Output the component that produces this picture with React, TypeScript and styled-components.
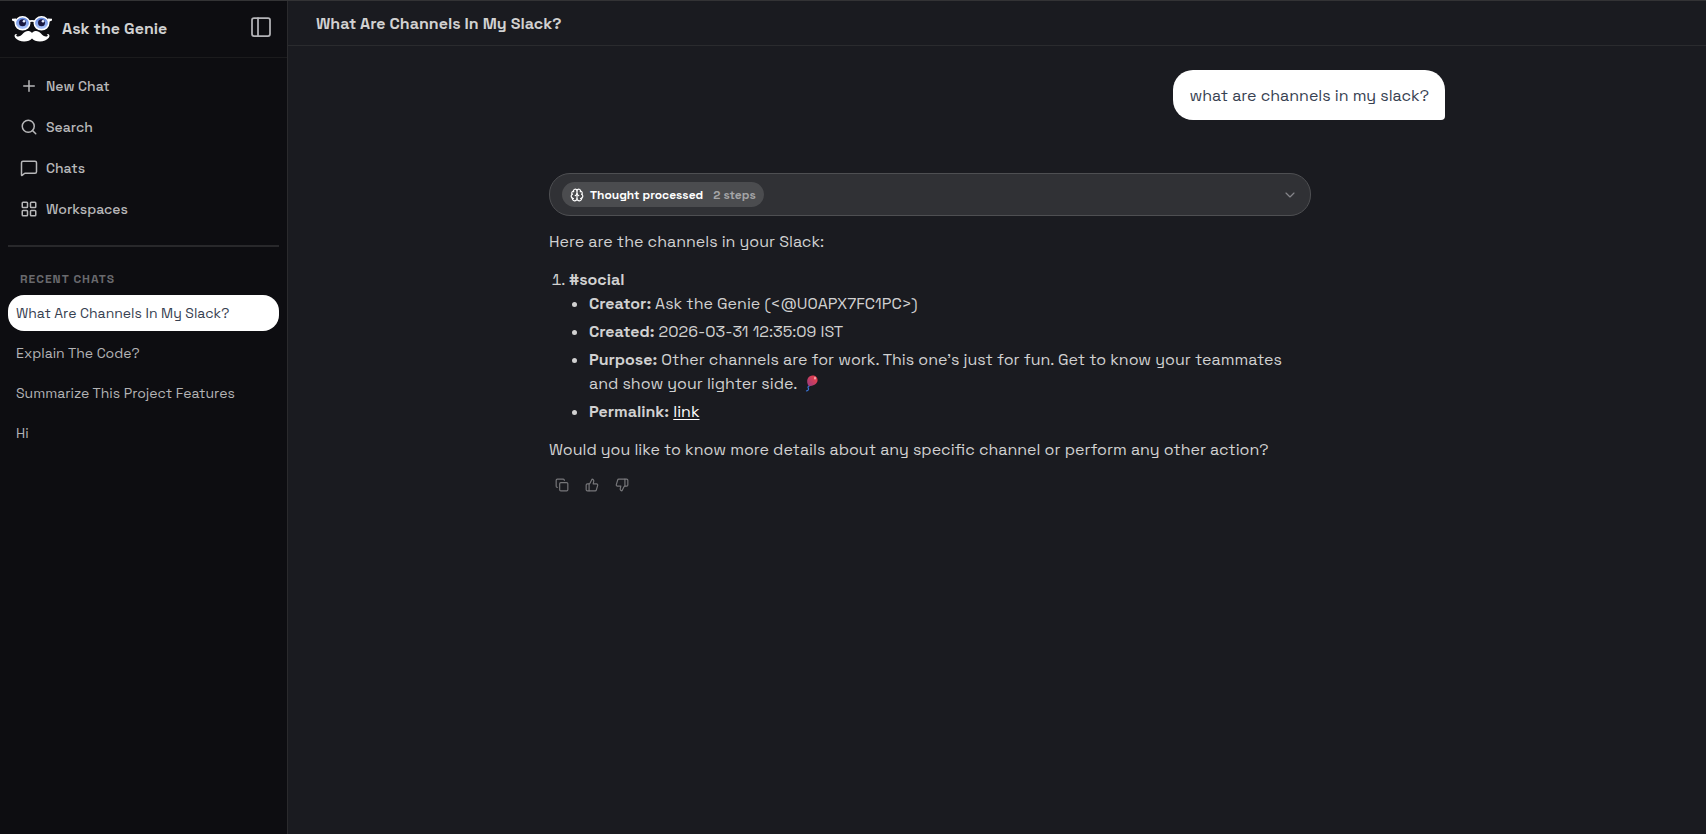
import React from "react";
import styled, { createGlobalStyle } from "styled-components";
import {
  Brain,
  ChevronDown,
  Copy,
  LayoutGrid,
  MessageSquare,
  PanelLeft,
  Plus,
  Search,
  ThumbsDown,
  ThumbsUp,
} from "lucide-react";

const GlobalStyle = createGlobalStyle`
  *, *::before, *::after { box-sizing: border-box; }
  body {
    margin: 0;
    background: #1a1b20;
    color: #d1d1d1;
    font-family: "Space Grotesk", Inter, "Liberation Sans", sans-serif;
    font-size: 16px;
    line-height: 24px;
  }
  button { font: inherit; color: inherit; background: none; border: 0; padding: 0; cursor: pointer; }
  h1, h2, p, ul, ol { margin: 0; padding: 0; font-size: inherit; }
`;

const Shell = styled.div`
  display: flex;
  min-height: 100vh;
  border-top: 1px solid #333335;
`;

const Sidebar = styled.aside`
  flex: 0 0 288px;
  display: flex;
  flex-direction: column;
  background: #0d0d11;
  border-right: 1px solid #2a2a2d;
`;

const SidebarHeader = styled.header`
  display: flex;
  align-items: center;
  height: 57px;
  padding: 0 12px;
  border-bottom: 1px solid #1b1b1d;
`;

const BrandName = styled.span`
  flex: 1;
  margin-left: 10px;
  font-weight: 600;
  font-size: 16px;
`;

const ToggleButton = styled.button`
  display: flex;
  padding: 2px;
  margin-bottom: 4px;
  color: #b4b4b8;
`;

const Nav = styled.nav`
  display: flex;
  flex-direction: column;
  gap: 5px;
  padding: 10px 8px 18px;
`;

const NavButton = styled.button`
  display: flex;
  align-items: center;
  gap: 8px;
  height: 36px;
  padding: 0 12px;
  color: #b7b7b9;
  font-size: 14px;
  font-weight: 500;
`;

const Divider = styled.hr`
  width: calc(100% - 16px);
  height: 2px;
  margin: 0 8px;
  border: 0;
  background: #28282b;
`;

const RecentTitle = styled.h2`
  margin: 24px 0 8px 20px;
  color: #69696d;
  font-size: 12px;
  line-height: 16px;
  font-weight: 600;
  letter-spacing: 1px;
`;

const ChatList = styled.ul`
  display: flex;
  flex-direction: column;
  gap: 4px;
  padding: 0 8px;
  list-style: none;
`;

const ChatButton = styled.button<{ $active?: boolean }>`
  width: 100%;
  height: 36px;
  padding: 0 8px;
  border-radius: 16px;
  text-align: left;
  font-size: 14px;
  background: ${(p) => (p.$active ? "#ffffff" : "transparent")};
  color: ${(p) => (p.$active ? "#374151" : "#b3b3b5")};
`;

const Main = styled.main`
  flex: 1;
  min-width: 0;
`;

const TopBar = styled.header`
  display: flex;
  align-items: center;
  height: 45px;
  padding: 1px 28px 0;
  border-bottom: 1px solid #2a2b2e;
`;

const Title = styled.h1`
  font-size: 16px;
  font-weight: 600;
`;

const Conversation = styled.section`
  display: flex;
  flex-direction: column;
  max-width: 896px;
  margin: 0 auto;
  padding-top: 24px;
`;

const UserBubble = styled.p`
  align-self: flex-end;
  padding: 14px 16px 12px;
  border-radius: 20px 20px 4px 20px;
  background: #ffffff;
  color: #374151;
`;

const Reply = styled.article`
  width: 85%;
  margin-top: 53px;
`;

const ThoughtBar = styled.button`
  display: flex;
  align-items: center;
  justify-content: space-between;
  width: 100%;
  height: 43px;
  padding: 0 12px;
  border: 1px solid #4e4f52;
  border-radius: 21px;
  background: #303135;
  color: #85868a;
`;

const ThoughtPill = styled.span`
  display: flex;
  align-items: center;
  height: 25px;
  padding: 0 8px;
  border-radius: 13px;
  background: #4b4c4f;
  color: #ffffff;
  font-size: 12px;
  font-weight: 600;
`;

const ThoughtLabel = styled.span`
  margin: 0 10px 0 6px;
`;

const StepCount = styled.span`
  color: #a5a5a7;
`;

const Paragraph = styled.p`
  margin: 14px 0;

  &:last-of-type {
    margin-bottom: 10px;
  }
`;

const Channels = styled.ol`
  padding-left: 20px;
`;

const Details = styled.ul`
  display: flex;
  flex-direction: column;
  gap: 4px;
  padding-left: 20px;
  list-style: disc;
`;

const Strong = styled.strong`
  font-weight: 600;
`;

const Link = styled.a`
  color: #ffffff;
  text-decoration: underline;
  text-underline-offset: 2px;
`;

const BalloonIcon = styled.svg`
  margin-left: 3px;
  vertical-align: -3px;
`;

const Actions = styled.div`
  display: flex;
  gap: 4px;
`;

const ActionButton = styled.button`
  display: flex;
  padding: 6px;
  color: #77777a;
`;

function GenieLogo() {
  return (
    <svg width="40" height="26" viewBox="0 0 40 26" aria-hidden="true">
      <defs>
        <linearGradient id="iris" x1="0" y1="0" x2="0" y2="1">
          <stop offset="0" stopColor="#5d83dd" />
          <stop offset="1" stopColor="#b4ccff" />
        </linearGradient>
      </defs>
      <path d="M0 2.800 4 2.500 5 6.500 3 7 2.300 5.500 0 4.500zM40 2.800 36 2.500 35 6.500 37 7 37.700 5.500 40 4.500z" fill="#fff" />
      <path d="M16 5.800Q20 4 24 5.800" fill="none" stroke="#fff" strokeWidth="1.800" />
      <ellipse cx="10.500" cy="7.300" rx="7.200" ry="6.500" fill="url(#iris)" stroke="#fff" strokeWidth="1.500" />
      <ellipse cx="29.500" cy="7.300" rx="7.200" ry="6.500" fill="url(#iris)" stroke="#fff" strokeWidth="1.500" />
      <circle cx="10.500" cy="6.800" r="3.500" fill="#19173f" />
      <circle cx="29.500" cy="6.800" r="3.500" fill="#19173f" />
      <circle cx="12" cy="5.300" r="1.300" fill="#e8eeff" />
      <circle cx="31" cy="5.300" r="1.300" fill="#e8eeff" />
      <path
        d="M20 17C17.500 14 13.500 14.500 11 17.500C9 20 6 21.500 4.500 20C3.800 19.200 4.500 18.200 5.500 18.500C3.500 16.800 1.500 19.200 3.200 21.800C6.500 26.500 17 26.500 20 22.500C23 26.500 33.500 26.500 36.800 21.800C38.500 19.200 36.500 16.800 34.500 18.500C35.500 18.200 36.200 19.200 35.500 20C34 21.500 31 20 29 17.500C26.500 14.500 22.500 14 20 17z"
        fill="#fff"
      />
    </svg>
  );
}

function Balloon() {
  return (
    <BalloonIcon width="16" height="17" viewBox="0 0 16 17" role="img" aria-label="balloon">
      <defs>
        <linearGradient id="balloon" x1="1" y1="0" x2="0" y2="1">
          <stop offset="0.300" stopColor="#dc3f52" />
          <stop offset="1" stopColor="#963b83" />
        </linearGradient>
      </defs>
      <path d="M6 10.500Q3 11.500 4.500 13.500Q5 15.500 2 16" fill="none" stroke="#3974d8" strokeWidth="1.200" />
      <path d="M8.500 0.500C12 0.300 14 3 13.500 6C13 9 9 11 5 11.300C3 9 2.500 5.500 4 3C5 1.300 6.500 0.600 8.500 0.500z" fill="url(#balloon)" />
      <ellipse cx="11" cy="3.200" rx="1" ry="1.400" fill="#f7a3a8" />
    </BalloonIcon>
  );
}

const navItems = [
  { label: "New Chat", Icon: Plus },
  { label: "Search", Icon: Search },
  { label: "Chats", Icon: MessageSquare },
  { label: "Workspaces", Icon: LayoutGrid },
];

const chats = [
  "What Are Channels In My Slack?",
  "Explain The Code?",
  "Summarize This Project Features",
  "Hi",
];

export default function App() {
  return (
    <>
      <GlobalStyle />
      <Shell>
        <Sidebar>
          <SidebarHeader>
            <GenieLogo />
            <BrandName>Ask the Genie</BrandName>
            <ToggleButton aria-label="Toggle sidebar">
              <PanelLeft size={24} strokeWidth={1.75} />
            </ToggleButton>
          </SidebarHeader>
          <Nav>
            {navItems.map(({ label, Icon }) => (
              <NavButton key={label}>
                <Icon size={18} />
                {label}
              </NavButton>
            ))}
          </Nav>
          <Divider />
          <RecentTitle>RECENT CHATS</RecentTitle>
          <ChatList>
            {chats.map((chat, i) => (
              <li key={chat}>
                <ChatButton $active={i === 0}>{chat}</ChatButton>
              </li>
            ))}
          </ChatList>
        </Sidebar>
        <Main>
          <TopBar>
            <Title>What Are Channels In My Slack?</Title>
          </TopBar>
          <Conversation>
            <UserBubble>what are channels in my slack?</UserBubble>
            <Reply>
              <ThoughtBar aria-expanded={false}>
                <ThoughtPill>
                  <Brain size={14} />
                  <ThoughtLabel>Thought processed</ThoughtLabel>
                  <StepCount>2 steps</StepCount>
                </ThoughtPill>
                <ChevronDown size={16} strokeWidth={1.75} />
              </ThoughtBar>
              <Paragraph>Here are the channels in your Slack:</Paragraph>
              <Channels>
                <li>
                  <Strong>#social</Strong>
                  <Details>
                    <li><Strong>Creator:</Strong> Ask the Genie (&lt;@U0APX7FC1PC&gt;)</li>
                    <li><Strong>Created:</Strong> 2026-03-31 12:35:09 IST</li>
                    <li>
                      <Strong>Purpose:</Strong> Other channels are for work. This one’s just for fun. Get to know
                      your teammates and show your lighter side. <Balloon />
                    </li>
                    <li><Strong>Permalink:</Strong> <Link href="#social">link</Link></li>
                  </Details>
                </li>
              </Channels>
              <Paragraph>
                Would you like to know more details about any specific channel or perform any other action?
              </Paragraph>
              <Actions>
                <ActionButton aria-label="Copy"><Copy size={14} /></ActionButton>
                <ActionButton aria-label="Good response"><ThumbsUp size={14} /></ActionButton>
                <ActionButton aria-label="Bad response"><ThumbsDown size={14} /></ActionButton>
              </Actions>
            </Reply>
          </Conversation>
        </Main>
      </Shell>
    </>
  );
}
